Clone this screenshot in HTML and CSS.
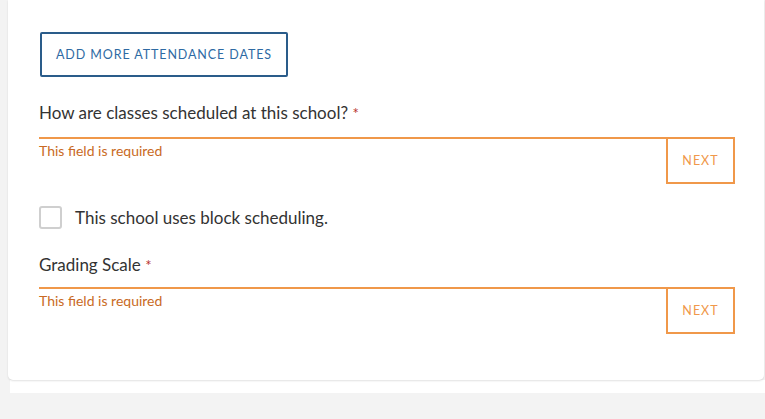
FILE: index.html
```html
<!DOCTYPE html>
<html>
<head>
<meta charset="utf-8">
<link rel="stylesheet" href="styles.css">
</head>
<body>
<div class="card">
  <button class="btn-outline">ADD MORE ATTENDANCE DATES</button>
  <div class="field first">
    <div class="label">How are classes scheduled at this school? <span class="req">*</span></div>
    <div class="row">
      <div class="input"><div class="error">This field is required</div></div>
      <div class="next">NEXT</div>
    </div>
  </div>
  <label class="check">
    <span class="box"></span>
    <span class="check-text">This school uses block scheduling.</span>
  </label>
  <div class="field second">
    <div class="label">Grading Scale <span class="req">*</span></div>
    <div class="row">
      <div class="input"><div class="error">This field is required</div></div>
      <div class="next">NEXT</div>
    </div>
  </div>
</div>
<div class="strip"></div>
</body>
</html>
```

FILE: styles.css
```css
* { box-sizing: border-box; }
html, body { margin: 0; padding: 0; }
body {
  background: #f3f3f3;
  font-family: "Source Sans Pro", "Lato", "Noto Sans", sans-serif;
  color: #333;
  width: 765px;
  height: 419px;
  overflow: hidden;
}
.card {
  margin-left: 8px;
  width: 756px;
  height: 380px;
  background: #fff;
  border-radius: 0 0 5px 5px;
  box-shadow: 0 1px 2px rgba(0,0,0,0.12);
  padding: 32px 29px 0 31px;
  position: relative;
  z-index: 1;
}
.strip {
  margin-left: 10px;
  height: 13px;
  background: #fff;
}
.btn-outline {
  display: block;
  width: 248px;
  height: 45px;
  margin-left: 1px;
  border: 2px solid #2a5c8a;
  border-radius: 2px;
  background: #fff;
  color: #2e6aa3;
  font-family: inherit;
  font-size: 12.5px;
  letter-spacing: 0.9px;
  padding: 0;
}
.field .label {
  font-size: 17px;
  color: #333;
  line-height: 20px;
}
.field.first { margin-top: 26px; }
.field.first .label { margin-bottom: 14px; }
.field.second { margin-top: 26px; }
.field.second .label { margin-bottom: 12px; }
.req { color: #b8322c; font-size: 15px; }
.row { display: flex; }
.input {
  flex: 1;
  border-top: 2px solid #f0984a;
  height: 47px;
}
.error {
  font-size: 14px;
  color: #c96a24;
  margin-top: 4px;
  line-height: 16px;
}
.next {
  width: 69px;
  height: 47px;
  border: 2px solid #f0984a;
  color: #f0984a;
  font-size: 12.5px;
  letter-spacing: 1px;
  display: flex;
  align-items: center;
  justify-content: center;
}
.check {
  display: flex;
  align-items: center;
  margin-top: 22px;
}
.box {
  width: 23px;
  height: 23px;
  border: 2px solid #cfcfcf;
  border-radius: 3px;
  margin-right: 13px;
}
.check-text {
  font-size: 17px;
  color: #333;
}
```
